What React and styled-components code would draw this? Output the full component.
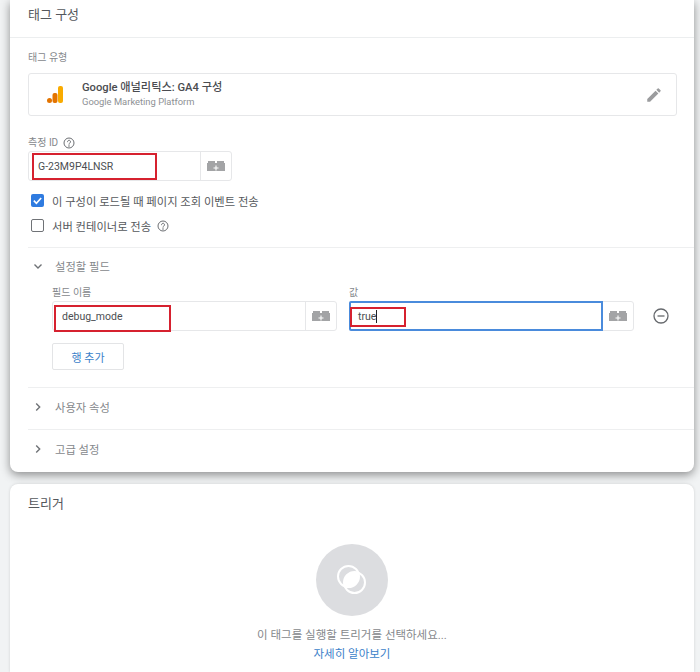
import React from 'react';
import styled, { createGlobalStyle } from 'styled-components';

const GlobalStyle = createGlobalStyle`
  html, body {
    margin: 0;
    height: 672px;
    overflow: hidden;
    background: #f1f3f4;
  }
  * { box-sizing: border-box; }
  #root {
    font-family: Roboto, "Noto Sans CJK KR", sans-serif;
    color: #3c4043;
  }
`;

const Page = styled.div`
  display: flex;
  flex-direction: column;
  gap: 12px;
  width: 700px;
  height: 672px;
  padding: 0 6px 0 10px;
  overflow: hidden;
`;

const Card = styled.section`
  background: #fff;
  border-radius: 8px 8px 0 0;
  box-shadow: 0 0 3px rgba(0,0,0,.14);
  flex: 1;
`;

const TopCard = styled.section`
  background: #fff;
  border-radius: 0 0 8px 8px;
  box-shadow: 0 3px 10px rgba(0,0,0,.42);
`;

const CardHeader = styled.header`
  height: 38px;
  padding: 7px 18px 0;
  font-size: 13px;
  line-height: 16px;
  color: #55585c;
  border-bottom: 1px solid #eceeef;
`;

const TriggerTitle = styled.h2`
  height: 38px;
  margin: 0;
  padding: 12px 18px 0;
  font-size: 13px;
  font-weight: 400;
  line-height: 16px;
  color: #55585c;
`;

const CardBody = styled.div`
  padding: 13px 0 1px 18px;
`;

const FieldLabel = styled.div`
  display: flex;
  align-items: center;
  gap: 5px;
  height: 14px;
  font-size: 10px;
  line-height: 14px;
  color: #85888c;
`;

const ColumnLabel = styled(FieldLabel)`
  padding-top: 2px;
`;

const TagBox = styled.div`
  display: flex;
  align-items: center;
  width: 649px;
  height: 43px;
  margin: 8px 0 20px;
  padding: 0 13px 0 18px;
  border: 1px solid #e6e7e9;
  border-radius: 3px;
`;

const TagText = styled.div`
  flex: 1;
  margin-left: 19px;
`;

const TagName = styled.div`
  font-size: 11.2px;
  line-height: 14px;
  font-weight: 500;
  color: #4a4c50;
`;

const TagSub = styled.div`
  font-size: 9.4px;
  line-height: 13px;
  color: #8d9094;
`;

const InputGroup = styled.div`
  position: relative;
  display: flex;
  width: ${({ $width }) => $width}px;
  height: 30px;
  margin-top: ${({ $gap }) => $gap ?? 2}px;
  border: 1px solid #e6e7e9;
  border-radius: 3px;
`;

const InputValue = styled.div`
  position: relative;
  flex: 1;
  display: flex;
  align-items: center;
  padding-left: ${({ $pad }) => $pad}px;
  font-size: 10.5px;
  color: #4c4e52;
  ${({ $focused }) => $focused && 'margin: -1px -1px -1px -1px; border: 2px solid #4a8bdc; border-radius: 2px 0 0 2px;'}
`;

const Caret = styled.span`
  display: inline-block;
  width: 1px;
  height: 13px;
  background: #202124;
`;

const VarButton = styled.div`
  width: 31px;
  display: flex;
  align-items: center;
  justify-content: center;
  border-left: 1px solid #e6e7e9;
`;

const RedMark = styled.span`
  position: absolute;
  left: ${({ $left }) => $left}px;
  top: ${({ $top }) => $top}px;
  width: ${({ $width }) => $width}px;
  height: ${({ $height }) => $height}px;
  border: 2px solid #d6212f;
  pointer-events: none;
`;

const CheckList = styled.div`
  margin: 7px 0 9px;
`;

const CheckRow = styled.label`
  display: flex;
  align-items: center;
  gap: 8px;
  height: 25px;
  padding-left: 3px;
  font-size: 11.3px;
  color: #55585c;
`;

const CheckBox = styled.span`
  width: 13px;
  height: 13px;
  display: flex;
  align-items: center;
  justify-content: center;
  border-radius: 2px;
  background: ${({ $checked }) => ($checked ? '#2f7be0' : '#fff')};
  border: ${({ $checked }) => ($checked ? 'none' : '1.5px solid #6f7276')};
`;

const Hint = styled.span`
  display: flex;
  margin-left: -2px;
`;

const Section = styled.div`
  border-top: 1px solid #eeeff0;
`;

const SectionHead = styled.div`
  display: flex;
  align-items: center;
  gap: 12px;
  height: ${({ $open }) => ($open ? 37 : 41)}px;
  padding: 0 0 ${({ $open }) => ($open ? 1 : 3)}px 5px;
  font-size: 11.3px;
  color: #85888c;
`;

const FieldRow = styled.div`
  display: flex;
  align-items: flex-start;
  padding-left: 24px;
  gap: 12px;
`;

const FieldColumn = styled.div`
  display: flex;
  flex-direction: column;
`;

const RemoveIcon = styled.div`
  margin: 23px 0 0 7px;
`;

const AddRowButton = styled.button`
  display: block;
  width: 72px;
  height: 27px;
  margin: 12px 0 17px 24px;
  background: #fff;
  border: 1px solid #e3e4e6;
  border-radius: 2px;
  font: 400 11px Roboto, "Noto Sans CJK KR", sans-serif;
  color: #3b7fc9;
`;

const Empty = styled.div`
  display: flex;
  flex-direction: column;
  align-items: center;
  padding-top: 22px;
`;

const EmptyCircle = styled.div`
  width: 72px;
  height: 72px;
  display: flex;
  align-items: center;
  justify-content: center;
  border-radius: 50%;
  background: #dcdde0;
`;

const EmptyText = styled.div`
  margin-top: 11px;
  font-size: 11.5px;
  line-height: 16px;
  color: #85888c;
`;

const LearnLink = styled.a`
  margin-top: 3px;
  font-size: 11.5px;
  line-height: 16px;
  color: #3b7fc9;
`;

const HelpIcon = () => (
  <svg width="12" height="12" viewBox="0 0 24 24" fill="none" stroke="#6b6e72" strokeWidth="2">
    <circle cx="12" cy="12" r="10" />
    <path d="M9 9.5a3 3 0 1 1 4.6 2.5c-1 .7-1.6 1.2-1.6 2.5" strokeLinecap="round" />
    <circle cx="12" cy="18" r=".6" fill="#6b6e72" />
  </svg>
);

const BlockIcon = () => (
  <svg width="18" height="10" viewBox="0 0 18 10">
    <path d="M0 2h1V0h7v2h2V0h7v2h1v8H0z" fill="#a3a4a6" />
    <path d="M9 4.5v5M6.5 7h5" stroke="#fff" strokeWidth="1.1" />
  </svg>
);

const Chevron = ({ open }) => (
  <svg width="10" height="10" viewBox="0 0 10 10" fill="none" stroke="#6f7276" strokeWidth="1.4">
    <path d={open ? 'M1.5 3.5 5 7l3.5-3.5' : 'M3.2 1.5 6.7 5 3.2 8.5'} />
  </svg>
);

const AnalyticsLogo = () => (
  <svg width="16" height="18" viewBox="0 0 16 18">
    <rect x="11" y="0" width="5" height="17" rx="2" fill="#f9ab00" />
    <rect x="5.5" y="7" width="5" height="10" rx="2" fill="#e37400" />
    <circle cx="2.5" cy="14.5" r="2.5" fill="#e37400" />
  </svg>
);

const PencilIcon = () => (
  <svg width="18" height="18" viewBox="0 0 24 24" fill="#9b9c9e">
    <path d="M3 17.25V21h3.75L17.81 9.94l-3.75-3.75L3 17.25zM20.71 7.04a1 1 0 0 0 0-1.41l-2.34-2.34a1 1 0 0 0-1.41 0l-1.83 1.83 3.75 3.75 1.83-1.83z" />
  </svg>
);

const CheckMark = () => (
  <svg width="11" height="11" viewBox="0 0 12 12" fill="none" stroke="#fff" strokeWidth="1.8">
    <path d="M2 6.2 4.8 9 10 3.2" />
  </svg>
);

const MinusCircle = () => (
  <svg width="16" height="16" viewBox="0 0 16 16" fill="none" stroke="#66696d" strokeWidth="1.3">
    <circle cx="8" cy="8" r="7" />
    <path d="M4.5 8h7" />
  </svg>
);

const TriggerIcon = () => (
  <svg width="32" height="32" viewBox="0 0 32 32">
    <circle cx="12.5" cy="12.5" r="10.5" fill="none" stroke="#fff" strokeWidth="2" />
    <circle cx="18.5" cy="18.5" r="10.5" fill="none" stroke="#fff" strokeWidth="2" />
    <path d="M22.3 8.7A10.5 10.5 0 0 1 8.7 22.3 10.5 10.5 0 0 1 22.3 8.7z" fill="#fff" />
  </svg>
);

const App = () => (
  <Page>
    <GlobalStyle />
    <TopCard>
      <CardHeader>태그 구성</CardHeader>
      <CardBody>
        <FieldLabel>태그 유형</FieldLabel>
        <TagBox>
          <AnalyticsLogo />
          <TagText>
            <TagName>Google 애널리틱스: GA4 구성</TagName>
            <TagSub>Google Marketing Platform</TagSub>
          </TagText>
          <PencilIcon />
        </TagBox>
        <FieldLabel>측정 ID <HelpIcon /></FieldLabel>
        <InputGroup $width={204} $gap={1}>
          <InputValue $pad={9}>G-23M9P4LNSR</InputValue>
          <VarButton><BlockIcon /></VarButton>
          <RedMark $left={3} $top={1} $width={125} $height={27} />
        </InputGroup>
        <CheckList>
          <CheckRow>
            <CheckBox $checked><CheckMark /></CheckBox>
            이 구성이 로드될 때 페이지 조회 이벤트 전송
          </CheckRow>
          <CheckRow>
            <CheckBox />
            서버 컨테이너로 전송
            <Hint><HelpIcon /></Hint>
          </CheckRow>
        </CheckList>
        <Section>
          <SectionHead $open><Chevron open />설정할 필드</SectionHead>
          <FieldRow>
            <FieldColumn>
              <ColumnLabel>필드 이름</ColumnLabel>
              <InputGroup $width={285}>
                <InputValue $pad={9}>debug_mode</InputValue>
                <VarButton><BlockIcon /></VarButton>
                <RedMark $left={1} $top={3} $width={117} $height={27} />
              </InputGroup>
            </FieldColumn>
            <FieldColumn>
              <ColumnLabel>값</ColumnLabel>
              <InputGroup $width={285}>
                <InputValue $pad={7} $focused>true<Caret /></InputValue>
                <VarButton><BlockIcon /></VarButton>
                <RedMark $left={0} $top={5} $width={56} $height={20} />
              </InputGroup>
            </FieldColumn>
            <RemoveIcon><MinusCircle /></RemoveIcon>
          </FieldRow>
          <AddRowButton>행 추가</AddRowButton>
        </Section>
        <Section>
          <SectionHead><Chevron />사용자 속성</SectionHead>
        </Section>
        <Section>
          <SectionHead><Chevron />고급 설정</SectionHead>
        </Section>
      </CardBody>
    </TopCard>
    <Card>
      <TriggerTitle>트리거</TriggerTitle>
      <Empty>
        <EmptyCircle><TriggerIcon /></EmptyCircle>
        <EmptyText>이 태그를 실행할 트리거를 선택하세요...</EmptyText>
        <LearnLink>자세히 알아보기</LearnLink>
      </Empty>
    </Card>
  </Page>
);

export default App;
